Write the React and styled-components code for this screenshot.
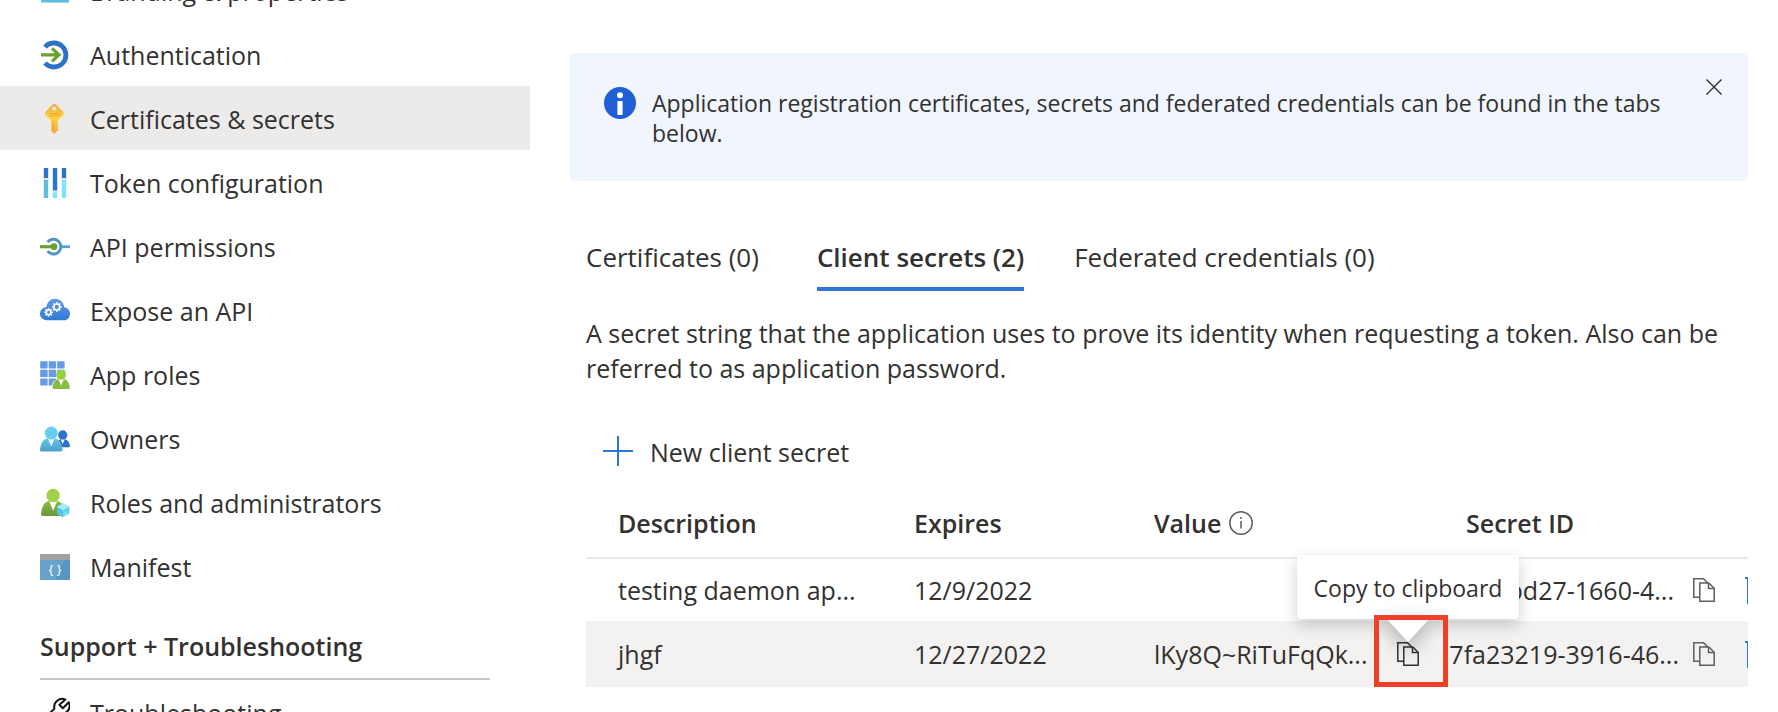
import React from "react";
import styled, { createGlobalStyle, css } from "styled-components";

const GlobalStyle = createGlobalStyle`
  *, *::before, *::after { box-sizing: border-box; }
  body {
    margin: 0;
    background: #fff;
    color: #323130;
    font-family: "Open Sans", "Noto Sans", sans-serif;
    font-size: 25px;
  }
  button { font: inherit; color: inherit; background: none; border: 0; padding: 0; cursor: pointer; }
  svg { display: block; flex: none; }
`;

const Shell = styled.div`
  display: flex;
  height: 100vh;
  overflow: hidden;
`;

/* ---------- sidebar ---------- */

const Sidebar = styled.nav`
  flex: none;
  width: 530px;
  margin-top: -42px;
`;

const NavList = styled.ul`
  list-style: none;
  margin: 0;
  padding: 0;
`;

const NavLink = styled.a`
  display: flex;
  align-items: center;
  gap: 20px;
  height: 64px;
  padding: 0 40px;
  color: inherit;
  text-decoration: none;
  line-height: 36px;
  background: ${(p) => (p.$active ? "#edebe9" : "transparent")};

  > span { padding-top: 2px; }
`;

const NavHeading = styled.h2`
  margin: 0 40px;
  padding: 31px 0 15px;
  border-bottom: 2px solid #c8c8c8;
  font-size: 25px;
  line-height: 34px;
  font-weight: 600;
`;

/* ---------- main panel ---------- */

const Main = styled.main`
  flex: 1;
  min-width: 0;
  padding: 53px 30px 0 40px;
`;

const Banner = styled.div`
  display: flex;
  align-items: flex-start;
  gap: 16px;
  min-height: 128px;
  padding: 34px 26px 0 34px;
  border-radius: 4px;
  background: #f0f5fe;
`;

const BannerText = styled.p`
  flex: 1;
  margin: 0;
  padding-top: 1px;
  font-size: 23px;
  line-height: 30px;
`;

const CloseButton = styled.button`
  display: grid;
  place-items: center;
  width: 16px;
  height: 16px;
  margin-top: -8px;
`;

const Content = styled.div`
  padding-left: 16px;
`;

const Tabs = styled.div`
  display: flex;
  gap: 50px;
  margin-top: 56px;
`;

/* The hidden bold copy keeps a tab's width the same when it is selected. */
const Tab = styled.button`
  display: flex;
  flex-direction: column;
  align-items: flex-start;
  padding: 0 0 10px;
  font-size: 26px;
  line-height: 40px;
  white-space: nowrap;
  border-bottom: 4px solid ${(p) => (p.$active ? "#2f76d0" : "transparent")};
  font-weight: ${(p) => (p.$active ? 600 : 400)};

  &::after {
    content: attr(data-label);
    height: 0;
    overflow: hidden;
    visibility: hidden;
    font-weight: 600;
  }
`;

const Intro = styled.p`
  margin: 25px 0 0;
  line-height: 35px;
`;

const NewSecret = styled.button`
  display: flex;
  align-items: center;
  gap: 16px;
  margin-top: 48px;
  padding-left: 16px;
  line-height: 36px;
`;

const SecretsTable = styled.table`
  width: 100%;
  margin-top: 18px;
  border-collapse: separate;
  border-spacing: 0;
  table-layout: fixed;
  text-align: left;
  line-height: 36px;
`;

const HeadCell = styled.th`
  height: 71px;
  padding: 0 0 0 ${(p) => (p.$narrow ? 18 : 32)}px;
  border-bottom: 2px solid #e9e9e9;
  font-weight: 600;
  vertical-align: middle;
`;

const HeadLabel = styled.span`
  display: flex;
  align-items: center;
  gap: 8px;
`;

const Row = styled.tr`
  height: ${(p) => (p.$hovered ? 66 : 62)}px;
  background: ${(p) => (p.$hovered ? "#f3f2f1" : "transparent")};
`;

const Cell = styled.td`
  padding: 0 0 0 32px;
  white-space: nowrap;
  vertical-align: middle;
`;

const ValueCell = styled(Cell)`
  > div {
    display: flex;
    align-items: center;
    justify-content: space-between;
  }
`;

const IdCell = styled(Cell)`
  padding-left: 0;
  overflow: hidden;
`;

const IdTools = styled.div`
  display: grid;
  grid-template-columns: 231px 22px 24px;
  column-gap: 14px;
  align-items: center;
  justify-content: start;
  > button:last-child { margin-left: 16px; }
`;

const IdText = styled.span`
  justify-self: end;
  padding-right: ${(p) => (p.$short ? 5 : 0)}px;
`;

const IconButton = styled.button`
  display: block;
  color: ${(p) => p.$tone || "#605e5c"};
`;

const CopyAnchor = styled.span`
  position: relative;
  display: flex;
  align-items: center;
  width: 74px;
  height: 66px;
  padding-left: 23px;
`;

const popupLayer = css`
  position: absolute;
  pointer-events: none;
`;

const Tooltip = styled.span`
  ${popupLayer}
  left: -77px;
  bottom: 68px;
  width: 222px;
  height: 64px;
  border-radius: 4px;
  background: #fff;
  box-shadow: 0 6px 16px rgba(0, 0, 0, 0.2);
  font-size: 23px;
  line-height: 66px;
  text-align: center;
`;

const Beak = styled.span`
  ${popupLayer}
  left: 12px;
  top: -3px;
  filter: drop-shadow(0 6px 10px rgba(0, 0, 0, 0.35));
`;

const Highlight = styled.span`
  ${popupLayer}
  inset: -6px 0 0 0;
  border: 5px solid #ee4026;
`;

/* ---------- icons ---------- */

const NavSvg = ({ children }) => (
  <svg width="30" height="32" viewBox="0 0 30 32" fill="none" aria-hidden="true">{children}</svg>
);

const BrandingIcon = () => (
  <NavSvg>
    <rect x="1" y="3" width="28" height="26" rx="1" fill="#5cbfdf" />
    <rect x="1" y="28" width="28" height="1" fill="#9bdcee" />
  </NavSvg>
);

const AuthIcon = () => (
  <NavSvg>
    <path d="M5 9A12 12 0 1 1 5 25" stroke="#2b73c6" strokeWidth="4.8" />
    <path d="M1 16.8H19M12 10.3L19 16.8L12 23.3" stroke="#69a22e" strokeWidth="3.2" />
  </NavSvg>
);

const KeyIcon = () => (
  <NavSvg>
    <defs>
      <linearGradient id="key" x1="0" y1="0" x2="0" y2="1">
        <stop offset="0" stopColor="#f0a83c" />
        <stop offset=".45" stopColor="#fcd53f" />
        <stop offset="1" stopColor="#f0a83c" />
      </linearGradient>
    </defs>
    <path fillRule="evenodd" fill="url(#key)" d="M12.3 2.9Q14.3 1.2 16.3 2.9L22.8 9.2Q24.8 11.3 22.8 13.6L17.6 19V21L18.4 22L17.2 23.4L18.4 24.8L17.2 26.2L18.4 27.6L14.3 32L11.2 29V19L6 13.6Q4 11.3 6 9.2ZM14.3 4.4a2.1 2.1 0 1 0 .01 0Z" />
    <path d="M9 11.6H19.6M9 13.8H19.6" stroke="#ee9a36" strokeWidth=".9" />
    <path d="M13.3 20V29" stroke="#ee9f3a" strokeWidth=".9" />
  </NavSvg>
);

const TokenIcon = () => (
  <NavSvg>
    <path d="M6 2V13M15 2V25.4M24 2V13" stroke="#2f73cd" strokeWidth="4.4" />
    <path d="M6 13V32" stroke="#5fbcdb" strokeWidth="4.4" />
    <path d="M15 25.4V32M24 13V32" stroke="#7ee4fb" strokeWidth="4.4" />
    <path d="M3 13H9M12 25.6H18M21 13H27" stroke="#e6e6e6" strokeWidth="2" />
  </NavSvg>
);

const PermissionIcon = () => (
  <NavSvg>
    <path d="M7.6 12.2A7.4 7.4 0 1 1 7.6 21.2" stroke="#5396c1" strokeWidth="3" />
    <path d="M21.5 16.7H30" stroke="#5aa0cc" strokeWidth="2.8" />
    <path d="M0 16.7H14" stroke="#69a22e" strokeWidth="3.2" />
    <circle cx="14" cy="16.7" r="3.4" fill="#69a22e" />
  </NavSvg>
);

const Gear = ({ x, y, r }) => (
  <g transform={`translate(${x} ${y})`}>
    <circle r={r} stroke="#fff" strokeWidth="1.5" />
    {[0, 45, 90, 135, 180, 225, 270, 315].map((a) => (
      <rect key={a} x="-.8" y={-r - 2} width="1.6" height="2" fill="#fff" transform={`rotate(${a})`} />
    ))}
  </g>
);

const ExposeIcon = () => (
  <NavSvg>
    <defs>
      <linearGradient id="cloud" x1="0" y1="0" x2="0" y2="1">
        <stop offset="0" stopColor="#6198e6" />
        <stop offset="1" stopColor="#3279d3" />
      </linearGradient>
    </defs>
    <path fill="url(#cloud)" d="M24 26.3H7C3 26.3 0 23.5 0 19.6C0 16 2.7 13.3 6.4 12.9C7.2 8 10.6 4.7 15 4.7C20 4.7 23.8 8.3 24.1 13.2C27.5 13.7 30 16.2 30 19.7C30 23.6 27.3 26.3 24 26.3Z" />
    <Gear x={16.8} y={13} r={2.9} />
    <Gear x={8.6} y={18.3} r={2.3} />
  </NavSvg>
);

const RolesIcon = () => (
  <NavSvg>
    {[3.2, 11.8, 20.4].map((y) =>
      [0.2, 8.7, 17.2].map((x) => (
        <rect key={`${x}-${y}`} x={x} y={y} width="7.4" height="7.2" rx=".6" fill="#6699e6" />
      ))
    )}
    <path d="M12 31V27C12.6 23.5 15 21.4 18 21.2V18H24V21.2C27 21.6 29.6 24 30 28.5V31Z" fill="#fff" />
    <path d="M12.4 29.8C12.7 25.6 14.7 21.6 18.2 21.3H24C27.4 21.6 29.4 25.6 29.8 29.8Q29.7 31 28.4 31H13.8Q12.5 31 12.4 29.8Z" fill="#86bd42" />
    <path d="M18.4 21.3H23.8L21.1 27.5Z" fill="#fff" />
    <circle cx="21.1" cy="16.8" r="5" fill="#97d043" />
  </NavSvg>
);

const OwnersIcon = () => (
  <NavSvg>
    <defs>
      <linearGradient id="owner" x1="0" y1="0" x2="0" y2="1">
        <stop offset="0" stopColor="#62c8e8" />
        <stop offset="1" stopColor="#4d9fc8" />
      </linearGradient>
    </defs>
    <path d="M17 25.2C17 21 18.5 17.5 20.4 17.2H25C28 17.8 29.7 21 30 24.2Q29.9 25.2 29 25.2Z" fill="#2f70ca" />
    <path d="M20.6 17.3H24.8L22.7 22Z" fill="#fff" />
    <circle cx="22.7" cy="12.9" r="4.6" fill="#2f70ca" />
    <path d="M0 27.9C.4 22.2 3 16.9 7.4 16.5H15C19.4 16.9 22 22.2 22.5 27.9Q22.3 29.4 20.8 29.4H1.7Q.2 29.4 0 27.9Z" fill="url(#owner)" />
    <path d="M7.8 16.5H14.6L11.3 24.6Z" fill="#e6f6fb" />
    <circle cx="11.3" cy="11" r="6.4" fill="#65ceee" />
  </NavSvg>
);

const AdminIcon = () => (
  <NavSvg>
    <defs>
      <linearGradient id="admin" x1="0" y1="0" x2="0" y2="1">
        <stop offset="0" stopColor="#87b93e" />
        <stop offset="1" stopColor="#6a9a37" />
      </linearGradient>
    </defs>
    <path d="M1 28.6C1.2 22.6 3.8 15.8 8.8 15.3H17.8C20.5 15.7 22.7 18 24 22V30H2.4Q1.1 30 1 28.6Z" fill="url(#admin)" />
    <path d="M9.2 15.4H17.2L13.2 24.4Z" fill="#fff" />
    <circle cx="13.1" cy="9.5" r="6.7" fill="#a3d04b" />
    <path d="M23.1 17.3L29.2 20.7V27.7L23.1 31.2L17 27.7V20.7Z" fill="#7cdff8" />
    <path d="M17 20.7L23.1 24.3V31.2L17 27.7Z" fill="#58c2e5" />
    <path d="M23.1 17.3L29.2 20.7L23.1 24.3L17 20.7Z" fill="#a4ecfc" />
    <path d="M29.2 20.7L23.1 24.3L29.2 27.7Z" fill="#62cdeb" />
  </NavSvg>
);

const ManifestIcon = () => (
  <NavSvg>
    <rect y="4" width="30" height="26" rx="1" fill="#5697c3" />
    <path d="M1 4H27L15 30H1Q0 30 0 29V5Q0 4 1 4Z" fill="#68a3ca" />
    <path d="M1 4H29Q30 4 30 5V10H0V5Q0 4 1 4Z" fill="#a0a1a2" />
    <text x="15" y="24" textAnchor="middle" fontSize="13" fill="#fff">{"{ }"}</text>
  </NavSvg>
);

const WrenchIcon = () => (
  <NavSvg>
    <path d="M25.4 3.6A8 8 0 0 0 14.4 12.6L2.4 24.6A3 3 0 0 0 7.4 29.4L19.4 17.4A8 8 0 0 0 28.8 6.2L22.8 12.2L19.4 8.8Z" stroke="#111" strokeWidth="2" strokeLinejoin="round" />
  </NavSvg>
);

const InfoBadge = () => (
  <svg width="32" height="32" viewBox="0 0 32 32" aria-hidden="true">
    <circle cx="16" cy="16" r="16" fill="#215fd5" />
    <circle cx="16" cy="8.3" r="3" fill="#fff" />
    <rect x="13.4" y="14" width="5.2" height="14" rx=".8" fill="#fff" />
  </svg>
);

const InfoOutline = () => (
  <svg width="24" height="24" viewBox="0 0 24 24" fill="none" stroke="#605e5c" strokeWidth="1.5" aria-hidden="true">
    <circle cx="12" cy="12" r="11.2" />
    <path d="M12 10V17.5M12 6V8" />
  </svg>
);

const CloseIcon = () => (
  <svg width="16" height="16" viewBox="0 0 16 16" stroke="#323130" strokeWidth="1.4" aria-hidden="true">
    <path d="M.5 .5L15.5 15.5M15.5 .5L.5 15.5" />
  </svg>
);

const PlusIcon = () => (
  <svg width="32" height="32" viewBox="0 0 32 32" stroke="#2f76d0" strokeWidth="2" aria-hidden="true">
    <path d="M1 15H31M16 0V30" />
  </svg>
);

const CopyIcon = () => (
  <svg width="22" height="24" viewBox="0 0 22 24" fill="none" stroke="currentColor" strokeWidth="1.5" aria-hidden="true">
    <path d="M6.5 19.2H.8V.8H10.5L14.8 5" />
    <path d="M6.8 5H15.8L21.2 10.2V23.2H6.8Z" />
    <path d="M15.5 5V10.5H21" />
  </svg>
);

const TrashIcon = () => (
  <svg width="24" height="28" viewBox="0 0 24 28" fill="none" stroke="currentColor" strokeWidth="2" aria-hidden="true">
    <path d="M0 2H24M3 2V27H21V2M8 2V0H16V2M8 7V22M12 7V22M16 7V22" />
  </svg>
);

/* ---------- data ---------- */

const links = [
  ["Branding & properties", BrandingIcon],
  ["Authentication", AuthIcon],
  ["Certificates & secrets", KeyIcon],
  ["Token configuration", TokenIcon],
  ["API permissions", PermissionIcon],
  ["Expose an API", ExposeIcon],
  ["App roles", RolesIcon],
  ["Owners", OwnersIcon],
  ["Roles and administrators", AdminIcon],
  ["Manifest", ManifestIcon],
];

const tabs = ["Certificates (0)", "Client secrets (2)", "Federated credentials (0)"];

const NavItem = ({ label, icon: Icon, active }) => (
  <li>
    <NavLink href="#" $active={active} aria-current={active ? "page" : undefined}>
      <Icon />
      <span>{label}</span>
    </NavLink>
  </li>
);

const SecretId = ({ children, short }) => (
  <IdCell>
    <IdTools>
      <IdText $short={short}>{children}</IdText>
      <IconButton aria-label="Copy secret ID"><CopyIcon /></IconButton>
      <IconButton aria-label="Delete secret" $tone="#2f76d0"><TrashIcon /></IconButton>
    </IdTools>
  </IdCell>
);

export default function App() {
  return (
    <>
      <GlobalStyle />
      <Shell>
        <Sidebar>
          <NavList>
            {links.map(([label, icon]) => (
              <NavItem key={label} label={label} icon={icon} active={label === "Certificates & secrets"} />
            ))}
          </NavList>
          <NavHeading>Support + Troubleshooting</NavHeading>
          <NavList>
            <NavItem label="Troubleshooting" icon={WrenchIcon} />
          </NavList>
        </Sidebar>

        <Main>
          <Banner>
            <InfoBadge />
            <BannerText>
              Application registration certificates, secrets and federated credentials can be found in the tabs below.
            </BannerText>
            <CloseButton aria-label="Dismiss"><CloseIcon /></CloseButton>
          </Banner>

          <Content>
            <Tabs role="tablist">
              {tabs.map((label, i) => (
                <Tab key={label} role="tab" data-label={label} $active={i === 1} aria-selected={i === 1}>
                  {label}
                </Tab>
              ))}
            </Tabs>
            <Intro>
              A secret string that the application uses to prove its identity when requesting a token. Also can be
              referred to as application password.
            </Intro>
            <NewSecret>
              <PlusIcon />
              New client secret
            </NewSecret>

            <SecretsTable>
              <colgroup>
                <col style={{ width: 296 }} />
                <col style={{ width: 240 }} />
                <col />
                <col style={{ width: 300 }} />
              </colgroup>
              <thead>
                <tr>
                  <HeadCell scope="col">Description</HeadCell>
                  <HeadCell scope="col">Expires</HeadCell>
                  <HeadCell scope="col"><HeadLabel>Value <InfoOutline /></HeadLabel></HeadCell>
                  <HeadCell scope="col" $narrow>Secret ID</HeadCell>
                </tr>
              </thead>
              <tbody>
                <Row>
                  <Cell>testing daemon ap...</Cell>
                  <Cell>12/9/2022</Cell>
                  <Cell />
                  <SecretId short>bd27-1660-4...</SecretId>
                </Row>
                <Row $hovered>
                  <Cell>jhgf</Cell>
                  <Cell>12/27/2022</Cell>
                  <ValueCell>
                    <div>
                      <span>lKy8Q~RiTuFqQk...</span>
                      <CopyAnchor>
                        <Tooltip role="tooltip">Copy to clipboard</Tooltip>
                        <Beak>
                          <svg width="44" height="24" viewBox="0 0 44 24" aria-hidden="true">
                            <path d="M0 0H44L22 24Z" fill="#fff" />
                          </svg>
                        </Beak>
                        <IconButton aria-label="Copy to clipboard" $tone="#323130"><CopyIcon /></IconButton>
                        <Highlight />
                      </CopyAnchor>
                    </div>
                  </ValueCell>
                  <SecretId>7fa23219-3916-46...</SecretId>
                </Row>
              </tbody>
            </SecretsTable>
          </Content>
        </Main>
      </Shell>
    </>
  );
}
